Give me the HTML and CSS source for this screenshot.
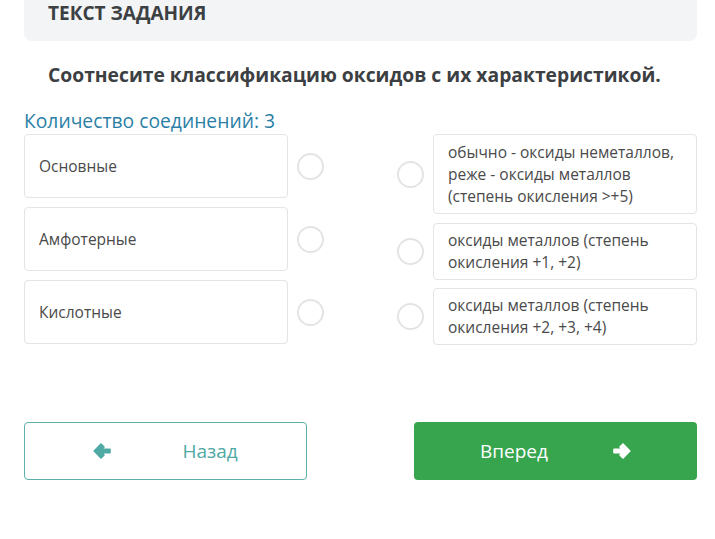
FILE: index.html
```html
<!DOCTYPE html>
<html lang="ru">
  <head>
    <meta charset="UTF-8" />
    <meta name="viewport" content="width=device-width, initial-scale=1.0" />
    <title>Текст задания</title>
    <link rel="stylesheet" href="styles.css">
  </head>

  <body>
    <div class="task-head">ТЕКСТ ЗАДАНИЯ</div>

    <h2 class="question">Соотнесите классификацию оксидов с их характеристикой.</h2>

    <div class="count">Количество соединений: 3</div>

    <div class="match">
      <div class="col col-left">
        <div class="row">
          <div class="card">Основные</div>
          <span class="dot"></span>
        </div>
        <div class="row">
          <div class="card">Амфотерные</div>
          <span class="dot"></span>
        </div>
        <div class="row">
          <div class="card">Кислотные</div>
          <span class="dot"></span>
        </div>
      </div>

      <div class="col col-right">
        <div class="row">
          <span class="dot"></span>
          <div class="card">обычно - оксиды неметаллов, реже - оксиды металлов (степень окисления &gt;+5)</div>
        </div>
        <div class="row">
          <span class="dot"></span>
          <div class="card">оксиды металлов (степень окисления +1, +2)</div>
        </div>
        <div class="row">
          <span class="dot"></span>
          <div class="card">оксиды металлов (степень окисления +2, +3, +4)</div>
        </div>
      </div>
    </div>

    <div class="nav">
      <button class="btn btn-back">
        <svg class="arrow" viewBox="0 0 18 16" width="18" height="16">
          <path d="M1.2 8 L8 1 L11 4 L8.5 6.3 H17 V9.7 H8.5 L11 12 L8 15 Z" fill="currentColor" stroke="currentColor" stroke-width="1.6" stroke-linejoin="round"/>
        </svg>
        <span>Назад</span>
      </button>
      <button class="btn btn-next">
        <span>Вперед</span>
        <svg class="arrow" viewBox="0 0 18 16" width="18" height="16">
          <path d="M16.8 8 L10 1 L7 4 L9.5 6.3 H1 V9.7 H9.5 L7 12 L10 15 Z" fill="currentColor" stroke="currentColor" stroke-width="1.6" stroke-linejoin="round"/>
        </svg>
      </button>
    </div>
  </body>
</html>
```

FILE: styles.css
```css
body {
  margin: 0;
  font-family: "Open Sans", "Noto Sans", sans-serif;
  color: #454545;
  background: #fff;
}

.task-head {
  margin: 0 18px 0 24px;
  height: 41px;
  padding-left: 24px;
  background: #f2f4f5;
  border-radius: 0 0 8px 8px;
  font-size: 19px;
  font-weight: 700;
  line-height: 26px;
  color: #3c4043;
  box-sizing: border-box;
}

.question {
  margin: 21px 0 0 48px;
  font-size: 19.3px;
  font-weight: 700;
  line-height: 26px;
  color: #3c4043;
}

.count {
  margin: 20px 0 0 24px;
  font-size: 19.3px;
  line-height: 26px;
  color: #2b7fa6;
}

.match {
  display: flex;
  justify-content: space-between;
  margin: 0 18px 0 24px;
}

.col {
  display: flex;
  flex-direction: column;
  width: 300px;
}

.col-left {
  gap: 9px;
}

.col-right {
  gap: 9px;
}

.col-right .row:nth-child(3) {
  margin-top: -1px;
}

.row {
  display: flex;
  align-items: center;
}

.card {
  width: 264px;
  box-sizing: border-box;
  border: 1px solid #e2e4e5;
  border-radius: 4px;
  padding: 6px 14px;
  font-size: 15.5px;
  line-height: 22px;
  color: #4a4a4a;
  background: #fff;
}

.col-left .card {
  height: 64px;
  display: flex;
  align-items: center;
}

.col-right .row:nth-child(2) .card,
.col-right .row:nth-child(3) .card {
  height: 57px;
  padding: 5px 14px;
}

.dot {
  width: 27px;
  height: 27px;
  box-sizing: border-box;
  border: 2px solid #e2e4e5;
  border-radius: 50%;
}

.col-left .dot {
  margin-left: 9px;
}

.col-right .dot {
  margin-right: 9px;
}

.nav {
  display: flex;
  justify-content: space-between;
  margin: 77px 18px 0 24px;
}

.btn {
  width: 283px;
  height: 58px;
  box-sizing: border-box;
  border-radius: 4px;
  display: flex;
  align-items: center;
  justify-content: center;
  font-family: "Open Sans", "Noto Sans", sans-serif;
  font-size: 19px;
  cursor: pointer;
}

.btn-back {
  background: #fff;
  border: 1px solid #5bb0aa;
  color: #4fa9a4;
  gap: 71px;
}

.btn-next {
  background: #37a54e;
  border: none;
  color: #fff;
  gap: 65px;
}

.arrow {
  display: block;
}
```
